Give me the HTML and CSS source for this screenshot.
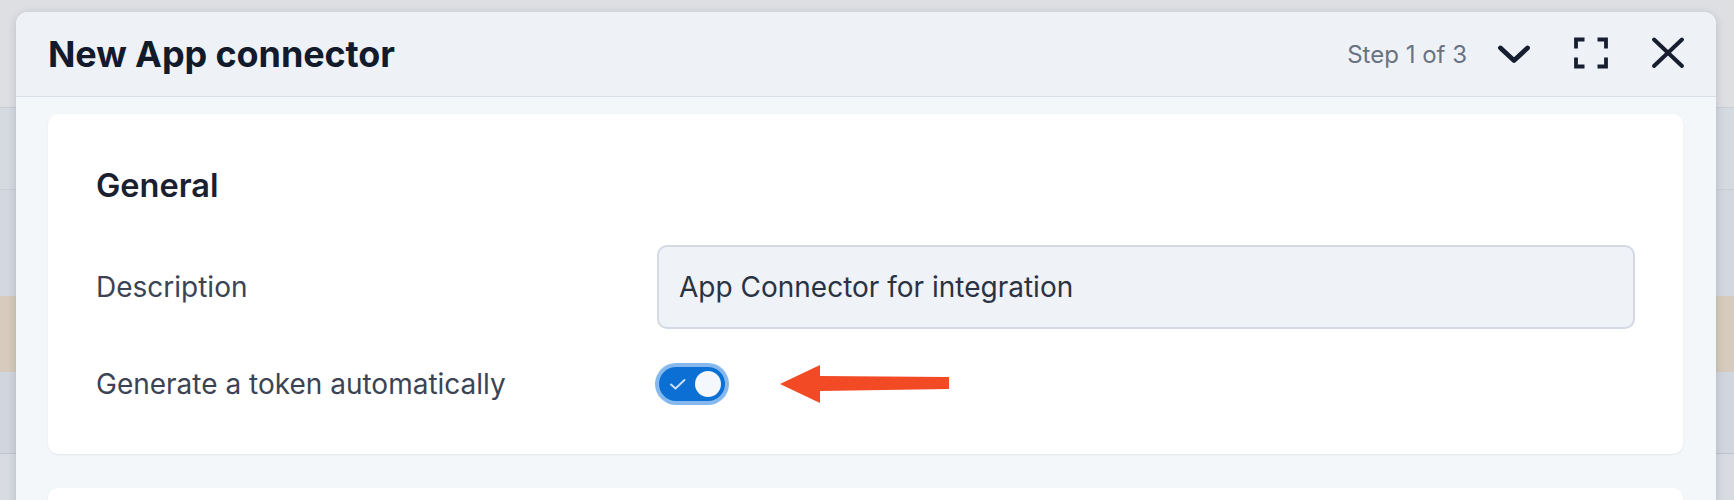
FILE: index.html
```html
<!DOCTYPE html>
<html lang="en">
<head>
<meta charset="utf-8">
<title>New App connector</title>
<link rel="stylesheet" href="styles.css">
</head>
<body>
<div class="app">
  <div class="app-row app-row--top"></div>
  <div class="app-row app-row--a"></div>
  <div class="app-row app-row--b"></div>
  <div class="app-row app-row--hl"></div>
  <div class="app-row app-row--c"></div>
  <div class="app-row app-row--d"></div>
</div>

<div class="overlay">
  <section class="modal">
    <header class="modal-header">
      <h1 class="modal-title">New App connector</h1>
      <div class="modal-tools">
        <span class="step">Step 1 of 3</span>
        <button class="icon-btn" aria-label="Collapse">
          <svg viewBox="0 0 40 40" width="40" height="40"><path d="M6.5 14 L20 26.5 L33.5 14" fill="none" stroke="currentColor" stroke-width="4.8" stroke-linecap="round" stroke-linejoin="round"/></svg>
        </button>
        <button class="icon-btn" aria-label="Maximize">
          <svg viewBox="0 0 40 40" width="40" height="40"><path d="M5 14.5 V5.5 H13.5 M26.5 5.5 H35 V14.5 M35 23.5 V32.5 H26.5 M13.5 32.5 H5 V23.5" fill="none" stroke="currentColor" stroke-width="3.8" stroke-linejoin="miter"/></svg>
        </button>
        <button class="icon-btn" aria-label="Close">
          <svg viewBox="0 0 40 40" width="40" height="40"><path d="M6 5.5 L34 32 M34 5.5 L6 32" fill="none" stroke="currentColor" stroke-width="4" stroke-linecap="round"/></svg>
        </button>
      </div>
    </header>

    <div class="modal-body">
      <div class="card">
        <h2 class="card-title">General</h2>
        <div class="form">
          <label class="form-label" for="desc">Description</label>
          <input class="form-input" id="desc" type="text" value="App Connector for integration">

          <span class="form-label">Generate a token automatically</span>
          <div class="toggle-cell">
            <span class="toggle" role="switch" aria-checked="true">
              <svg class="toggle-check" viewBox="0 0 20 16" width="20" height="16"><path d="M3 8.5 L7.5 12.5 L16.5 4" fill="none" stroke="currentColor" stroke-width="2" stroke-linecap="round" stroke-linejoin="round"/></svg>
              <span class="toggle-knob"></span>
            </span>
            <svg class="annot-arrow" viewBox="0 0 170 38" width="170" height="38"><polygon points="0,19 40,0 40,11 169,12 169,24 40,26 40,38" fill="#f24a25"/></svg>
          </div>
        </div>
      </div>
      <div class="card card--next"></div>
    </div>
  </section>
</div>
</body>
</html>
```

FILE: styles.css
```css
* { box-sizing: border-box; }

html, body {
  margin: 0;
  padding: 0;
  height: 500px;
  overflow: hidden;
}

body {
  font-family: "Inter", "Liberation Sans", sans-serif;
  background: #d9dce2;
  position: relative;
}

/* background application, dimmed behind the modal */
.app {
  display: flex;
  flex-direction: column;
}
.app-row { width: 100%; }
.app-row--top { height: 108px; background: #dedfe3; border-bottom: 1px solid #c9cdd6; }
.app-row--a { height: 82px; background: #d5d9e0; border-bottom: 1px solid #c9cdd6; }
.app-row--b { height: 106px; background: #d3d7df; }
.app-row--hl { height: 76px; background: #d6cbbc; }
.app-row--c { height: 82px; background: #d1d5de; border-bottom: 1px solid #bfc5d0; }
.app-row--d { height: 60px; background: #d8dbe2; }

/* modal overlay */
.overlay {
  position: absolute;
  top: 12px;
  left: 16px;
  right: 18px;
}

.modal {
  background: #f4f7fa;
  border-radius: 12px 12px 0 0;
  box-shadow: 0 2px 10px rgba(30, 40, 60, 0.18);
  overflow: hidden;
  height: 520px;
}

.modal-header {
  height: 85px;
  display: flex;
  align-items: center;
  justify-content: space-between;
  padding: 0 28px 0 32px;
  background: #eef2f7;
  border-bottom: 1px solid #d9dfe8;
}

.modal-title {
  margin: 0;
  font-size: 36px;
  line-height: 1;
  font-weight: 700;
  color: #121a2c;
  letter-spacing: -0.1px;
}

.modal-tools {
  display: flex;
  align-items: center;
}

.step {
  font-size: 24px;
  color: #6a7282;
  margin-right: 27px;
}

.icon-btn {
  width: 40px;
  height: 40px;
  padding: 0;
  border: 0;
  background: none;
  color: #161e30;
  display: flex;
  align-items: center;
  justify-content: center;
  margin-left: 37px;
}
.step + .icon-btn { margin-left: 0; }
.icon-btn svg { display: block; }

.modal-body {
  padding: 17px 33px 0 32px;
  display: flex;
  flex-direction: column;
  gap: 34px;
}

.card {
  background: #ffffff;
  border-radius: 10px;
  box-shadow: 0 1px 2px rgba(30, 45, 70, 0.08);
  padding: 50px 48px 46px;
}
.card--next { height: 60px; padding: 0; }

.card-title {
  margin: 0 0 37px;
  font-size: 32.5px;
  line-height: 44px;
  font-weight: 600;
  color: #1a2030;
}

.form {
  display: grid;
  grid-template-columns: 561px 1fr;
  row-gap: 31px;
  align-items: center;
}

.form-label {
  font-size: 28px;
  color: #3b4354;
}

.form-input {
  height: 84px;
  width: 100%;
  border: 2px solid #d3dae4;
  border-radius: 10px;
  background: #eff2f7;
  padding: 0 20px;
  font-family: inherit;
  font-size: 28px;
  color: #2a3243;
  outline: none;
}

.toggle-cell {
  height: 48px;
  display: flex;
  align-items: center;
  position: relative;
}

.toggle {
  position: relative;
  margin-left: 2px;
  width: 66px;
  height: 34px;
  border-radius: 17px;
  background: #0b6fd3;
  box-shadow: 0 0 0 4px rgba(33, 128, 222, 0.55);
  display: flex;
  align-items: center;
  justify-content: space-between;
  padding: 0 4px 0 9px;
}

.toggle-check { color: #c9dff6; display: block; }

.toggle-knob {
  width: 26px;
  height: 26px;
  border-radius: 50%;
  background: #f4f8fc;
}

/* annotation arrow drawn over the form */
.annot-arrow {
  position: absolute;
  left: 123px;
  top: 5px;
}
```
